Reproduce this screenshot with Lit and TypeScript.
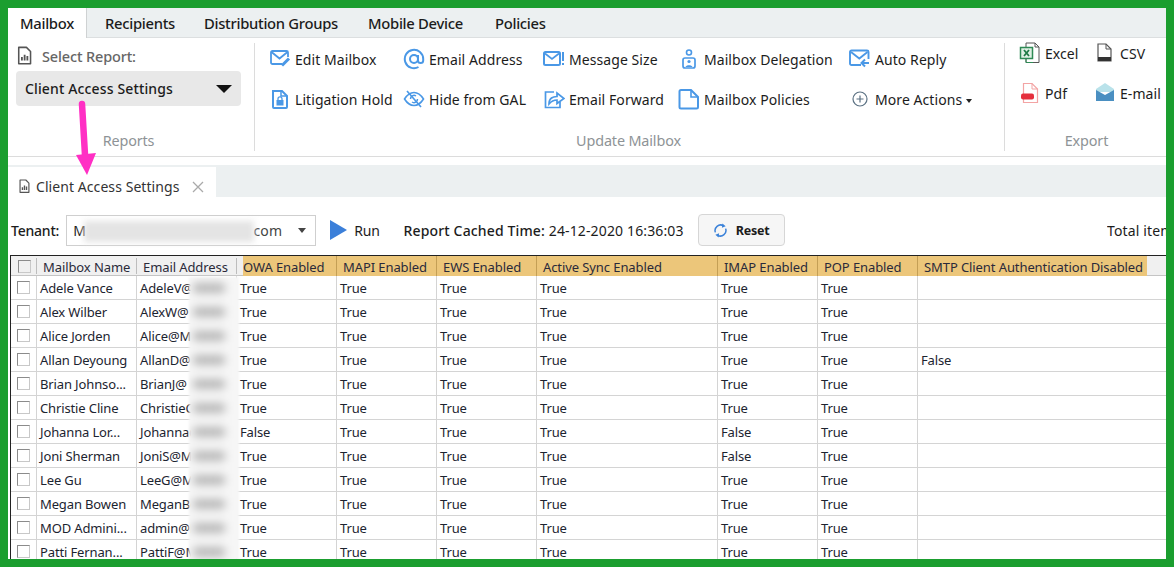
import { LitElement, html, css, svg } from "lit";
import { customElement } from "lit/decorators.js";

const B = "#4a98e6";
const icons: Record<string, any> = {
  edit: svg`<path d="M13 16H3.5A1.5 1.5 0 0 1 2 14.5V4.5A1.5 1.5 0 0 1 3.500 3H17.500A1.500 1.500 0 0 1 19 4.500V9" fill="none" stroke="${B}" stroke-width="1.800"/><path d="M2.500 4L10.500 10.500L18.500 4" fill="none" stroke="${B}" stroke-width="1.800"/><path d="M13 17.500L20 10.500" stroke="${B}" stroke-width="3"/>`,
  lit: svg`<path d="M4 3H13L18 8V19A1 1 0 0 1 17 20H5A1 1 0 0 1 4 19Z" fill="none" stroke="${B}" stroke-width="2"/><path d="M12 3V8H18" fill="none" stroke="${B}" stroke-width="1.500"/><rect x="7.500" y="12" width="7" height="5.500" fill="${B}"/><path d="M9 12V10.800A2 2 0 0 1 13 10.800V12" fill="none" stroke="${B}" stroke-width="1.300"/>`,
  at: svg`<circle cx="11" cy="11" r="4" fill="none" stroke="${B}" stroke-width="2"/><path d="M15 7V12.500A2.600 2.600 0 0 0 20.200 12.500V11A9.200 9.200 0 1 0 15.500 19" fill="none" stroke="${B}" stroke-width="2"/>`,
  hide: svg`<path d="M1.500 11C5 5.500 9 4.500 11 4.500S17 5.500 20.500 11C17 16.500 13 17.500 11 17.500S5 16.500 1.500 11Z" fill="none" stroke="${B}" stroke-width="1.600"/><path d="M7.500 11A3.500 3.500 0 0 1 13 8M14.500 11A3.500 3.500 0 0 1 9 14" fill="none" stroke="${B}" stroke-width="1.500"/><path d="M4 3L18 19" stroke="${B}" stroke-width="1.600"/>`,
  size: svg`<rect x="1" y="4" width="16" height="13" rx="1.500" fill="none" stroke="${B}" stroke-width="2"/><path d="M2 5.500L9 11L16 5.500" fill="none" stroke="${B}" stroke-width="1.700"/><path d="M20 4V13M20 15V17" stroke="${B}" stroke-width="2"/>`,
  fwd: svg`<path d="M11 4H2.500V19.500H17V14" fill="none" stroke="${B}" stroke-width="1.700"/><path d="M6 16C6 10 10 8.500 14 8.500V5L21 10.500L14 15.500V12C11 12 8.500 13 6 16Z" fill="none" stroke="${B}" stroke-width="1.700"/>`,
  del: svg`<circle cx="11" cy="4.500" r="2.500" fill="none" stroke="${B}" stroke-width="1.600"/><path d="M5 12A2 2 0 0 1 7 10H15A2 2 0 0 1 17 12V18A2 2 0 0 1 15 20H7A2 2 0 0 1 5 18Z" fill="none" stroke="${B}" stroke-width="1.700"/><circle cx="11" cy="13.500" r="1.600" fill="${B}"/><path d="M7.500 19C8 16.500 14 16.500 14.500 19" fill="${B}"/>`,
  pol: svg`<path d="M3 2H13L20 9V19A1.500 1.500 0 0 1 18.500 20.500H3A1.500 1.500 0 0 1 1.500 19V3.500A1.500 1.500 0 0 1 3 2Z" fill="none" stroke="${B}" stroke-width="2"/><path d="M13 2V9H20" fill="none" stroke="${B}" stroke-width="1.600"/>`,
  auto: svg`<path d="M12 17H2.500A1.500 1.500 0 0 1 1 15.500V4A1.500 1.500 0 0 1 2.500 2.500H18A1.500 1.500 0 0 1 19.500 4V11" fill="none" stroke="${B}" stroke-width="1.900"/><path d="M2 4L10.300 10.500L18.500 4" fill="none" stroke="${B}" stroke-width="1.800"/><path d="M20 15H13M16 11.500L12.500 15L16 18.500" fill="none" stroke="${B}" stroke-width="2"/>`,
  more: svg`<circle cx="11" cy="11" r="7" fill="none" stroke="#5b7183" stroke-width="1.200"/><path d="M7.500 11H14.500M11 7.500V14.500" stroke="#5b7183" stroke-width="1.200"/>`,
  excel: svg`<path d="M7 1H16L20 5V20.500H7Z" fill="#fff" stroke="#555" stroke-width="1"/><path d="M16 1V5H20" fill="none" stroke="#555"/><rect x="1.500" y="5.500" width="12" height="11" fill="#dff0e4" stroke="#2f8a55" stroke-width="1.500"/><path d="M5 8L10 14M10 8L5 14" stroke="#1d7a44" stroke-width="1.800"/><path d="M7 17V20.500H14" fill="none" stroke="#2f8a55"/>`,
  csv: svg`<path d="M4 2H12L17 7V19H4Z" fill="#fff" stroke="#555" stroke-width="1.200"/><path d="M12 2V7H17" fill="none" stroke="#555"/><rect x="4" y="15" width="13" height="4" fill="#333"/>`,
  pdf: svg`<path d="M4.500 1.500H13L18.500 7V20.500H4.500Z" fill="#fff" stroke="#f3a4a4" stroke-width="1.200"/><path d="M13 1.500V7H18.500" fill="none" stroke="#f3a4a4"/><rect x="2" y="11.500" width="13" height="6" rx="2" fill="#e52f3d"/>`,
  mail: svg`<path d="M2 7L11 1L20 7V10H2Z" fill="#b9e2ea"/><path d="M2 8L11 13L20 8V19H2Z" fill="#4a8fc1"/>`,
  rep: svg`<path d="M3 1.500H11.500L16 6V19.500H3Z" fill="none" stroke="#555" stroke-width="1.700" stroke-linejoin="round"/><path d="M6.500 16V12M9.500 16V9.500M12.500 16V11" stroke="#555" stroke-width="2"/>`,
};
const ic = (n: string, s = 22) => html`<svg width=${s} height=${s} viewBox="0 0 22 22" aria-hidden="true">${icons[n]}</svg>`;

const cols = ["Mailbox Name", "Email Address", "OWA Enabled", "MAPI Enabled", "EWS Enabled", "Active Sync Enabled", "IMAP Enabled", "POP Enabled", "SMTP Client Authentication Disabled"];
const T = "True", F = "False";
const rows: [string, string, string, string, string][] = [
  ["Adele Vance", "AdeleV@", T, T, ""],
  ["Alex Wilber", "AlexW@", T, T, ""],
  ["Alice Jorden", "Alice@M", T, T, ""],
  ["Allan Deyoung", "AllanD@", T, T, F],
  ["Brian Johnso...", "BrianJ@", T, T, ""],
  ["Christie Cline", "ChristieC@", T, T, ""],
  ["Johanna Lor...", "Johanna@", F, F, ""],
  ["Joni Sherman", "JoniS@M", T, F, ""],
  ["Lee Gu", "LeeG@M", T, T, ""],
  ["Megan Bowen", "MeganB@", T, T, ""],
  ["MOD Admini...", "admin@M", T, T, ""],
  ["Patti Fernan...", "PattiF@M", T, T, ""],
];

@customElement("app-root")
export class AppRoot extends LitElement {
  static styles = css`
    :host { display: block; width: 1174px; height: 567px; box-sizing: border-box; border: 8px solid #1b9e2f; background: #fff; overflow: hidden; position: relative; font: 14px "Noto Sans", "Open Sans", sans-serif; color: #1c1c1c; }
    .tabs { display: flex; height: 30px; background: #ecf0f1; border-bottom: 1px solid #dcdfe0; box-sizing: border-box; }
    .tab { display: flex; align-items: center; font-size: 14.800px; font-weight: 500; letter-spacing: -.02em; white-space: nowrap; flex: none; }
    .tab.on { background: #fff; width: 79px; padding-left: 12px; box-sizing: border-box; border-right: 1px solid #cfd2d3; height: 30px; }
    .tab.r { margin-left: 18px; width: 99px; }
    .tab.d { width: 164px; } .tab.m { width: 127px; }
    .ribbon { display: flex; height: 119px; box-sizing: border-box; border-bottom: 1px solid #dcdcdc; padding-top: 5px; }
    .group { display: flex; flex-direction: column; border-right: 1px solid #dcdcdc; height: 108px; box-sizing: border-box; position: relative; }
    .g1 { width: 247px; padding: 2px 0 0 8px; }
    .g2 { width: 750px; padding: 0 0 0 14px; }
    .g3 { flex: 1; border-right: 0; padding: 0 0 0 14px; }
    .sel-label { display: flex; align-items: center; gap: 6px; color: #666; font-weight: 500; height: 22px; letter-spacing: -.01em; font-size: 14.500px; }
    .sel { margin-top: 4px; width: 225px; height: 35px; background: #e8e8e8; border-radius: 4px; display: flex; align-items: center; justify-content: space-between; padding: 0 9px; box-sizing: border-box; font-weight: 500; letter-spacing: .01em; }
    .caret { width: 0; height: 0; border: 8px solid transparent; border-top: 8px solid #111; border-bottom: 0; }
    .glabel { margin-top: auto; color: #8e9396; text-align: center; font-size: 14.400px; height: 20px; letter-spacing: -.01em; line-height: 20px; flex: none; }
    .g1 .glabel { width: 225px; }
    .g2 .glabel { padding-right: 16px; } .g3 .glabel { padding-right: 12px; }
    .acts { display: grid; grid-template-columns: 134px 140px 135px 171px auto; grid-auto-rows: 40px; margin-top: -4px; }
    .acts3 { grid-template-columns: 75px auto; margin-top: -10px; }
    .act { display: flex; align-items: center; gap: 4px; white-space: nowrap; letter-spacing: .005em; font-size: 14px; }
    .act svg { flex: none; }
    .tri { display: inline-block; margin-left: 4px; vertical-align: middle; border: 3px solid transparent; border-top: 4px solid #222; border-bottom: 0; }
    .strip { margin-top: 8px; height: 32px; background: #ecf0f1; display: flex; }
    .rtab { width: 208px; background: #fff; display: flex; align-items: center; box-sizing: border-box; padding: 9px 0 0 10px; gap: 3px; letter-spacing: .005em; color: #333; white-space: nowrap; margin-top: 2px; }
    .close { margin-left: 10px; width: 12px; height: 12px; }
    .bar { height: 58px; display: flex; align-items: center; white-space: nowrap; box-sizing: border-box; padding: 8px 0 0 3px; font-size: 14px; letter-spacing: -.015em; }
    .bar b { font-weight: 500; }
    .tenant { margin-left: 7px; width: 250px; height: 31px; border: 1px solid #cfcfcf; box-sizing: border-box; display: flex; align-items: center; padding: 0 9px 0 6px; position: relative; }
    .smudge { position: absolute; left: 17px; top: 5px; width: 170px; height: 21px; background: #e4e4e4; filter: blur(3px); }
    .dom { margin-left: auto; margin-right: 16px; color: #444; letter-spacing: .01em; }
    .tri2 { border: 4px solid transparent; border-top: 5px solid #444; border-bottom: 0; }
    .run { display: flex; align-items: center; margin-left: 13px; gap: 6px; }
    .cached { margin-left: 24px; letter-spacing: .01em; }
    .reset { margin-left: 14px; width: 87px; height: 32px; border: 1px solid #d6d6d6; border-radius: 4px; background: #f6f6f6; display: flex; align-items: center; justify-content: center; gap: 8px; font-size: 12.500px; font-weight: 700; box-sizing: border-box; }
    .total { margin-left: auto; margin-right: -6px; overflow: hidden; width: 65px; letter-spacing: .01em; }
    .grid { margin-left: 2px; border-left: 1px solid #222; border-top: 1px solid #222; position: relative; height: 304px; overflow: hidden; font-size: 13px; letter-spacing: -.01em; }
    .row { display: grid; grid-template-columns: 26px 100px 100px 100px 100px 100px 181px 100px 100px 229px 1fr; height: 24px; border-bottom: 1px solid #d4d4d4; box-sizing: border-box; }
    .row.head { height: 20px; background: #f0f0f0; border-bottom: 1px solid #c4c4c4; }
    .cell { border-right: 1px solid #d4d4d4; box-sizing: border-box; padding: 2px 0 0 3px; white-space: nowrap; overflow: hidden; line-height: 21px; color: #1c2430; }
    .cell.end { border-right: 0; }
    .head .cell { padding: 0 0 0 6px; border-right: 1px solid #bdbdbd; margin: 2px 0; height: 16px; line-height: 18px; color: #2a2a3a; letter-spacing: -.007em; overflow: visible; }
    .head .hot { background: #ecc67a; margin: 0; height: 20px; padding-top: 2px; border-right-color: #c49f55; }
    .head .hot.off { margin-left: 6px; padding-left: 0; }
    .head .end { border-right: 0; }
    .cb { width: 11px; height: 11px; border: 1px solid #8b8b8b; border-right-color: #c8c8c8; border-bottom-color: #c8c8c8; margin: 5px 0 0 6px; display: block; }
    .head .cb { margin-top: 2px; margin-left: 7px; }
    .cell.first { padding: 0; }
    .blur { position: absolute; left: 178px; top: 21px; width: 50px; bottom: 0; background: #f6f6f6; filter: blur(.8px); overflow: hidden; }
    .blur i { position: absolute; left: 4px; width: 32px; height: 10px; background: #b8b8b8; filter: blur(4px); border-radius: 4px; }
    .arrow { position: absolute; left: 60px; top: 90px; width: 40px; height: 90px; }
  `;

  render() {
    return html`
      <div class="tabs">
        <div class="tab on">Mailbox</div><div class="tab r">Recipients</div><div class="tab d">Distribution Groups</div><div class="tab m">Mobile Device</div><div class="tab">Policies</div>
      </div>
      <div class="ribbon">
        <div class="group g1">
          <div class="sel-label">${ic("rep", 20)}<span>Select Report:</span></div>
          <div class="sel"><span>Client Access Settings</span><span class="caret"></span></div>
          <div class="glabel">Reports</div>
        </div>
        <div class="group g2">
          <div class="acts">
            ${this.act("edit", "Edit Mailbox")}${this.act("at", "Email Address")}${this.act("size", "Message Size")}${this.act("del", "Mailbox Delegation")}${this.act("auto", "Auto Reply")}
            ${this.act("lit", "Litigation Hold")}${this.act("hide", "Hide from GAL")}${this.act("fwd", "Email Forward")}${this.act("pol", "Mailbox Policies")}
            <div class="act">${ic("more")}<span>More Actions<i class="tri"></i></span></div>
          </div>
          <div class="glabel">Update Mailbox</div>
        </div>
        <div class="group g3">
          <div class="acts acts3">
            ${this.act("excel", "Excel")}${this.act("csv", "CSV")}${this.act("pdf", "Pdf")}${this.act("mail", "E-mail")}
          </div>
          <div class="glabel">Export</div>
        </div>
      </div>
      <div class="strip">
        <div class="rtab">${ic("rep", 15)}<span>Client Access Settings</span>
          <svg class="close" viewBox="0 0 12 12"><path d="M1 1L11 11M11 1L1 11" stroke="#aaa" stroke-width="1.300"/></svg></div>
      </div>
      <div class="bar">
        <b>Tenant:</b>
        <div class="tenant"><span>M</span><span class="smudge"></span><span class="dom">com</span><span class="tri2"></span></div>
        <div class="run"><svg width="19" height="22" viewBox="0 0 19 22"><path d="M1 1L18 11L1 21Z" fill="#3b7fd9"/></svg><span>Run</span></div>
        <div class="cached"><b>Report Cached Time:</b> 24-12-2020 16:36:03</div>
        <div class="reset"><svg width="15" height="15" viewBox="0 0 16 16"><path d="M2.500 10A6 6 0 0 1 11 2.800M13.500 6A6 6 0 0 1 5 13.200" fill="none" stroke="#3b82d9" stroke-width="1.600"/><path d="M10 .5L13.500 3.500L9.500 5ZM6 15.500L2.500 12.500L6.500 11Z" fill="#3b82d9"/></svg><span>Reset</span></div>
        <div class="total">Total items</div>
      </div>
      <div class="grid">
        <div class="row head">
          <div class="cell first"><span class="cb"></span></div>
          ${cols.map((c, i) => html`<div class="cell ${i >= 2 ? "hot" : ""} ${i === 2 ? "off" : ""} ${i === 8 ? "end" : ""}">${c}</div>`)}
          <div class="cell end"></div>
        </div>
        ${rows.map((r) => html`<div class="row">
          <div class="cell first"><span class="cb"></span></div>
          <div class="cell">${r[0]}</div><div class="cell">${r[1]}</div>
          <div class="cell">${r[2]}</div><div class="cell">${T}</div><div class="cell">${T}</div><div class="cell">${T}</div>
          <div class="cell">${r[3]}</div><div class="cell">${T}</div><div class="cell end">${r[4]}</div><div class="cell end"></div>
        </div>`)}
        <div class="blur">${rows.map((_, i) => html`<i style="top:${6 + i * 24}px"></i>`)}</div>
      </div>
      <svg class="arrow" viewBox="0 0 40 90">
        <path d="M14 6L17 57" stroke="#ff2fc4" stroke-width="6.500" stroke-linecap="round"/>
        <path d="M8 57L28 55L19 77Z" fill="#ff2fc4"/>
      </svg>
    `;
  }

  act(i: string, t: string) {
    return html`<div class="act">${ic(i)}<span>${t}</span></div>`;
  }
}
